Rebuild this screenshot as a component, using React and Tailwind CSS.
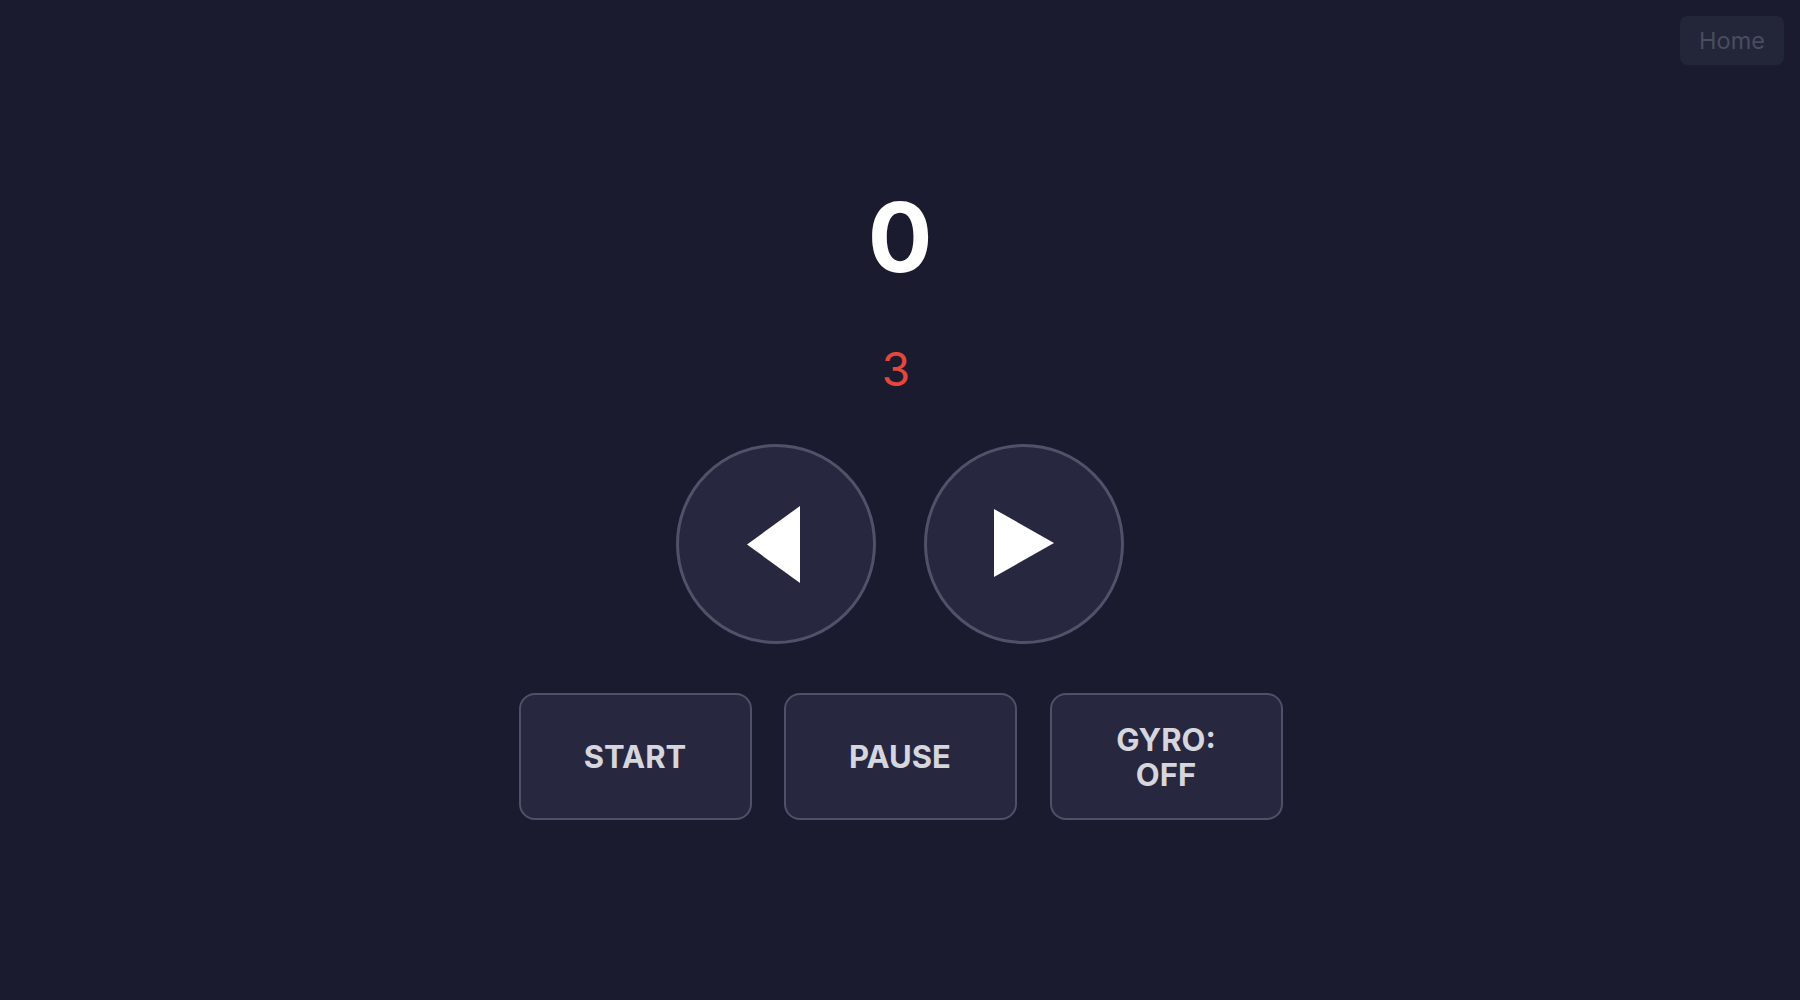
export default function App() {
  return (
    <div
      className="min-h-screen bg-[#1a1b2e] relative"
      style={{ fontFamily: 'Inter, "Noto Sans", sans-serif' }}
    >
      {/* Home link */}
      <button className="absolute top-4 right-4 h-[49px] w-[104px] rounded-lg bg-[#232539] text-[#4a4c5f] text-[23.5px] flex items-center justify-center">
        Home
      </button>

      <div className="flex flex-col items-center pt-[189px]">
        {/* Score */}
        <div className="text-8xl leading-none font-bold text-white">0</div>

        {/* Countdown */}
        <div className="mt-[61px] text-[46px] leading-none text-[#e4473b] -translate-x-[4px]">3</div>

        {/* Direction pad */}
        <div className="mt-[52px] flex gap-12">
          <button className="w-[200px] h-[200px] rounded-full bg-[#272840] border-[3px] border-[#50526a] flex items-center justify-center">
            <svg width="53" height="77" viewBox="0 0 53 77" className="-translate-x-[3px]">
              <polygon points="0,38.5 53,0 53,77" fill="#ffffff" />
            </svg>
          </button>
          <button className="w-[200px] h-[200px] rounded-full bg-[#272840] border-[3px] border-[#50526a] flex items-center justify-center">
            <svg width="60" height="68" viewBox="0 0 60 68" className="-translate-y-[1px]">
              <polygon points="0,0 60,34 0,68" fill="#ffffff" />
            </svg>
          </button>
        </div>

        {/* Controls */}
        <div className="mt-[49px] flex gap-8">
          <button className="w-[233px] h-[127px] rounded-2xl bg-[#272840] border-2 border-[#4f5167] text-[#d6d6de] text-[31px] leading-[35px] font-bold px-6">
            START
          </button>
          <button className="w-[233px] h-[127px] rounded-2xl bg-[#272840] border-2 border-[#4f5167] text-[#d6d6de] text-[31px] leading-[35px] font-bold px-6">
            PAUSE
          </button>
          <button className="w-[233px] h-[127px] rounded-2xl bg-[#272840] border-2 border-[#4f5167] text-[#d6d6de] text-[31px] leading-[35px] font-bold px-12 translate-x-[1px]">
            GYRO: OFF
          </button>
        </div>
      </div>
    </div>
  );
}
